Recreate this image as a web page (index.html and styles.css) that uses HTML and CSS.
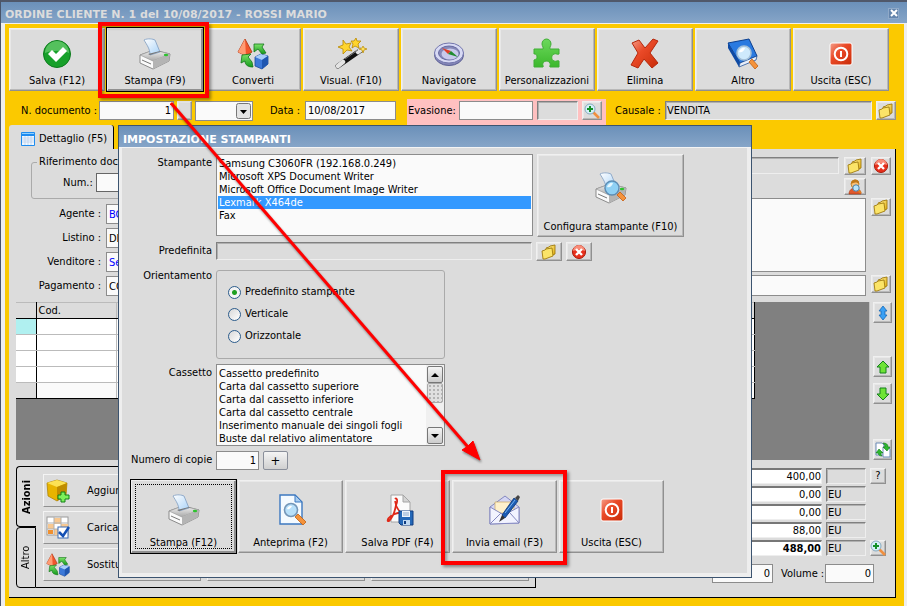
FILE: index.html
```html
<!DOCTYPE html>
<html lang="it">
<head>
    <meta charset="UTF-8">
    <meta name="viewport" content="width=device-width, initial-scale=1.0">
    <title>Ordine cliente</title>
    <link rel="stylesheet" href="styles.css">
</head>
<body>

<svg class="defs" width="0" height="0" aria-hidden="true">
    <defs>
        <linearGradient id="gGreen" x1="0" y1="0" x2="0" y2="1"><stop offset="0" stop-color="#7ee36a"/><stop offset="1" stop-color="#149a1c"/></linearGradient>
        <linearGradient id="gLime" x1="0" y1="0" x2="0" y2="1"><stop offset="0" stop-color="#6cd85c"/><stop offset="1" stop-color="#3cb82c"/></linearGradient>
        <linearGradient id="gRed" x1="0" y1="0" x2="1" y2="1"><stop offset="0" stop-color="#f4a08c"/><stop offset="0.4" stop-color="#ea4a28"/><stop offset="1" stop-color="#c82c08"/></linearGradient>
        <linearGradient id="gGold" x1="0" y1="0" x2="1" y2="1"><stop offset="0" stop-color="#fff3a0"/><stop offset="1" stop-color="#e0a800"/></linearGradient>
        <linearGradient id="gPaper" x1="0" y1="0" x2="1" y2="1"><stop offset="0" stop-color="#ffffff"/><stop offset="1" stop-color="#a8d2f8"/></linearGradient>
        <linearGradient id="gGrey" x1="0" y1="0" x2="0" y2="1"><stop offset="0" stop-color="#f4f4f4"/><stop offset="1" stop-color="#a8a8a8"/></linearGradient>
    </defs>
    <symbol id="check" viewBox="0 0 32 32">
        <circle cx="16" cy="16" r="13.5" fill="#17a02a" stroke="#0c7a1c"/>
        <path d="M4 15a12 12 0 0 1 24 0c-6-3-17-3-24 0z" fill="#6fcf74" opacity=".7"/>
        <path d="M7 16l4-4 4 4 7-7 4 4-11 11z" fill="#fff"/>
    </symbol>
    <symbol id="printer" viewBox="0 0 32 32">
        <path d="M1 17l14-5 16 4-1 7-16 8-13-6z" fill="#fafafa" stroke="#8a8a8a"/>
        <path d="M1 17l14-5 16 4-17 7z" fill="url(#gGrey)" stroke="#999" stroke-width=".7"/>
        <path d="M14 23l17-7-1 7-16 8z" fill="#b4b4b4"/>
        <path d="M3 22l9 4" stroke="#777" stroke-width="1"/>
        <path d="M5 2c4-2 9-1 11 0l5 12-10 3c0-6-3-10-6-15z" fill="url(#gPaper)" stroke="#7d9cc0" stroke-width=".8"/>
        <path d="M9 16l12-3 2 0-12 4z" fill="#777"/>
        <ellipse cx="27" cy="17" rx="2.2" ry="1.3" fill="#2dc22d"/>
    </symbol>
    <symbol id="printer-lens" viewBox="0 0 32 32">
        <use href="#printer"/>
        <path d="M22 23l3-3 6 6-3 3z" fill="#f4933c" stroke="#c85c10" stroke-width=".8"/>
        <circle cx="17" cy="16" r="7" fill="#8fd0f4" stroke="#5d8db4" stroke-width="1.4"/>
        <path d="M12 15a5 5 0 0 1 6-4c-1 3-3 5-6 4z" fill="#e6f7ff"/>
    </symbol>
    <symbol id="convert" viewBox="0 0 32 32">
        <path d="M8 1l7 13-6 4-8-4z" fill="#f0562c" stroke="#a83210" stroke-width=".8"/>
        <path d="M8 1l1 17-8-4z" fill="#ff9c74"/>
        <path d="M18 19l6-3 7 2v8l-6 5-7-3z" fill="#3b78d8" stroke="#1b4a9c" stroke-width=".8"/>
        <path d="M18 19l6-3 7 2-6 4z" fill="#a8cdfa"/><path d="M25 22l6-4v8l-6 5z" fill="#1f56b0"/>
        <path d="M17 6h10l-2 3 4 6-4 1-4-5-4 3z" fill="url(#gGreen)" stroke="#12761a" stroke-width=".8"/>
        <path d="M5 17l9-1-3 3 4 5 1 5c-5 0-8-2-8-6l-4 2z" fill="url(#gGreen)" stroke="#12761a" stroke-width=".8"/>
    </symbol>
    <symbol id="wand" viewBox="0 0 32 32">
        <path d="M3 28L26 12" stroke="#111" stroke-width="5" stroke-linecap="round"/>
        <path d="M3 28l5-4M23 14l4-3" stroke="#e4e4e4" stroke-width="4.5" stroke-linecap="round"/>
        <path d="M10 21l13-9" stroke="#777" stroke-width="1"/>
        <path d="M8 2l3 4 5-1-2 4 3 4-5-1-4 4v-5L3 9l5-2z" fill="#ffd52e" stroke="#b98800" stroke-width=".8"/>
        <path d="M21 0l1 3 4 0-3 3 1 4-4-2-3 2 1-4-2-3 3 0z" fill="#ffd52e" stroke="#b98800" stroke-width=".8"/>
        <path d="M28 8l1 2 3 1-3 1-1 3-1-3-3-1 3-1z" fill="#ffe25a" stroke="#b98800" stroke-width=".7"/>
    </symbol>
    <symbol id="compass" viewBox="0 0 32 32">
        <ellipse cx="16" cy="17" rx="14.5" ry="10.5" fill="#8587b8" stroke="#5c5f94"/>
        <ellipse cx="16" cy="15" rx="14.5" ry="10" fill="#d8daf4" stroke="#7376ac"/>
        <ellipse cx="16" cy="15" rx="10.5" ry="7" fill="#8688b8" stroke="#6669a0"/>
        <ellipse cx="17" cy="16" rx="8.5" ry="5.5" fill="#c8caec"/>
        <path d="M9 10l9 3-3 3z" fill="#e04028"/><path d="M25 19l-7-6-3 3z" fill="#208c30"/>
    </symbol>
    <symbol id="puzzle" viewBox="0 0 32 32">
        <path d="M3 11h9c1-1-1-3-1-5 0-3 2-5 4.500-5S20 3 20 6c0 2-2 4-1 5h9v5c-2 1-3-1-5 0-3 1-3 6 0 7 2 1 3-1 5 0v6h-9c-1-1 1-2 0-4-2-3-6-2-7 0-1 2 1 3 0 4H3v-7c1-1 3 0 3-3s-2-3-3-3z" fill="url(#gLime)" stroke="#3fae34"/>
    </symbol>
    <symbol id="cross" viewBox="0 0 32 32">
        <path d="M3 5l7-3 6 8 8-9 5 2-8 12 8 10-6 5-8-9-6 9-7-3 7-12z" fill="url(#gRed)" stroke="#b5280c"/>
    </symbol>
    <symbol id="book" viewBox="0 0 32 32">
        <path d="M1 5L22 1l8 17-17 7z" fill="#2a7ae0" stroke="#0c4090"/>
        <path d="M1 5l12 20-1 4L1 10z" fill="#0e4aa4"/>
        <path d="M12 29l1-4 17-7-1 4z" fill="#e8eef8" stroke="#0c4090" stroke-width=".7"/>
        <path d="M22 24l3-3 6 7-3 3z" fill="#f4933c" stroke="#c06010" stroke-width=".8"/>
        <circle cx="17" cy="15" r="7" fill="#cfeafc" stroke="#a4c0d8" stroke-width="1.6"/>
        <path d="M12 14a5 5 0 0 1 6-4c-1 3-3 5-6 4z" fill="#fff"/>
    </symbol>
    <symbol id="power" viewBox="0 0 32 32">
        <rect x="5" y="5" width="22" height="22" rx="2" fill="url(#gRed)" stroke="#fff"/>
        <circle cx="16" cy="16" r="6.300" fill="none" stroke="#fff" stroke-width="2"/>
        <path d="M16 13v6" stroke="#fff" stroke-width="2"/>
    </symbol>
    <symbol id="folder" viewBox="0 0 16 16">
        <path d="M5 4l3-1 1-1 5-1v9l-7 3z" fill="url(#gGold)" stroke="#a07c10" stroke-width=".9"/>
        <path d="M1 7l3-1 1-1 6-1 1 8-8 3-2 0z" fill="#fbe468" stroke="#a07c10" stroke-width=".9"/>
    </symbol>
    <symbol id="remove" viewBox="0 0 16 16">
        <circle cx="8" cy="8" r="6.500" fill="#e8301c" stroke="#a81808"/>
        <path d="M2 7a6 6 0 0 1 12 0c-4-2-8-2-12 0z" fill="#f88c78"/>
        <path d="M5 5l6 6M11 5l-6 6" stroke="#fff" stroke-width="2.400"/>
    </symbol>
    <symbol id="person" viewBox="0 0 16 16">
        <path d="M2 15c0-4 3-6 6-6s6 2 6 6z" fill="#e0582c" stroke="#a83810" stroke-width=".6"/>
        <circle cx="8" cy="5" r="4" fill="#f8c078" stroke="#b87820" stroke-width=".8"/>
        <path d="M4 5c0-6 9-6 8 0-2-2-5-2-8 0z" fill="#c07818"/>
        <path d="M11 11l3 3" stroke="#e08020" stroke-width="2"/>
        <circle cx="9" cy="9" r="3.200" fill="#b8e4fa" stroke="#4c80a8"/>
    </symbol>
    <symbol id="zoom-plus" viewBox="0 0 16 16">
        <path d="M9 9l6 6" stroke="#f09040" stroke-width="2.600"/>
        <circle cx="6" cy="6" r="5" fill="#d4f0f8" stroke="#88aac0"/>
        <path d="M6 3v6M3 6h6" stroke="#129028" stroke-width="2"/>
    </symbol>
    <symbol id="updown" viewBox="0 0 16 16">
        <path d="M8 1l4 5h-2v4h2l-4 5-4-5h2V6H4z" fill="#3aa0f4" stroke="#1468b8" stroke-width=".8"/>
    </symbol>
    <symbol id="up" viewBox="0 0 16 16">
        <path d="M8 2l6 6h-3v6H5V8H2z" fill="#6ee436" stroke="#14801c"/>
    </symbol>
    <symbol id="down" viewBox="0 0 16 16">
        <path d="M8 14l6-6h-3V2H5v6H2z" fill="#6ee436" stroke="#14801c"/>
    </symbol>
    <symbol id="swap" viewBox="0 0 16 16">
        <path d="M1 1h6l2 2v10H1z" fill="#fff" stroke="#6c8cb8"/>
        <path d="M8 5h5l2 2v8H8z" fill="#fff" stroke="#6c8cb8"/>
        <path d="M4 7l4 4H6c0 2 0 2 1 3-2 0-4-1-4-3H1z" fill="#2eb82e" stroke="#0f7a18" stroke-width=".6"/>
        <path d="M12 9L8 5h2c0-2-1-3-2-4 3 0 5 1 5 4h2z" fill="#2eb82e" stroke="#0f7a18" stroke-width=".6"/>
    </symbol>
    <symbol id="box" viewBox="0 0 24 24">
        <path d="M1 4l10-3 10 3-1 12-9 6-9-5z" fill="#e8b400" stroke="#a87c00" stroke-width=".7"/>
        <path d="M1 4l10-3 10 3-10 4z" fill="#fce254"/><path d="M11 8l10-4-1 12-9 6z" fill="#bf8c00"/>
        <path d="M15 13h4v3h4v4h-4v3h-4v-3h-3v-4h3z" fill="#7cf05a" stroke="#128018"/>
    </symbol>
    <symbol id="grid-check" viewBox="0 0 24 24">
        <rect x="1" y="1" width="21" height="18" fill="#fff" stroke="#9a9a9a"/>
        <path d="M2 8h6v5H2zM8 2h7v6H8zM15 8h7v5h-7zM8 13h5v6H8z" fill="#f8c890"/>
        <path d="M2 14h5v4H2z" fill="#f09030"/>
        <path d="M8 1v18M15 1v18M1 7h21M1 13h21" stroke="#b0b0b0"/>
        <rect x="12" y="11" width="10" height="11" fill="#fff" stroke="#3c6cb4"/>
        <path d="M13 16l4 4 6-9" fill="none" stroke="#1450b4" stroke-width="2.500"/>
    </symbol>
    <symbol id="calendar" viewBox="0 0 14 14">
        <rect x="0" y="0" width="14" height="14" rx="1" fill="#1e8cf0"/>
        <rect x="1" y="4" width="12" height="9" fill="#f0f8ff"/>
        <path d="M1 1h12v1H1z" fill="#8fd0ff"/>
        <path d="M1 6h12M1 8h12M1 10h12M4 4v9M7 4v9M10 4v9" stroke="#b8cce8" stroke-width=".7"/>
    </symbol>
    <symbol id="preview" viewBox="0 0 32 32">
        <path d="M5 1h15l7 7v22H5z" fill="#f4faff" stroke="#3c78c0" stroke-width="1.400"/>
        <path d="M20 1v7h7z" fill="#a8cdf0" stroke="#3c78c0"/>
        <path d="M20 23l3-3 8 8-3 3z" fill="#f4933c" stroke="#c06010" stroke-width=".8"/>
        <circle cx="16" cy="16" r="6.500" fill="#b8e0fa" stroke="#7496b8" stroke-width="1.600"/>
        <path d="M12 15a4 4 0 0 1 5-3c-1 2-3 4-5 3z" fill="#fff"/>
    </symbol>
    <symbol id="pdf" viewBox="0 0 32 32">
        <path d="M9 1h12l7 7v20H9z" fill="#fbfbfb" stroke="#a4a4a4"/>
        <path d="M21 1v7h7z" fill="#d4d4d4" stroke="#a4a4a4"/>
        <path d="M13 5c2-2 3 2 1 6-1 6-4 13-7 16-2 1-2-2 2-5 4-3 10-4 13-3" fill="none" stroke="#e02818" stroke-width="1.800"/>
        <path d="M13 7c1 6 3 10 7 12" fill="none" stroke="#e02818" stroke-width="1.600"/>
        <path d="M17 17h14v14H19l-2-2z" fill="#2468b8" stroke="#103c80"/>
        <path d="M20 17h8v6h-8z" fill="#eef4fc"/><path d="M21 19h6M21 21h6" stroke="#8aa8cc"/>
        <path d="M21 26h7v5h-7z" fill="#c0d8f0"/><path d="M22 27h2v3h-2z" fill="#103c80"/>
    </symbol>
    <symbol id="mail" viewBox="0 0 32 32">
        <path d="M1 13L16 2l14 11v16l-29 1z" fill="#d4d6f4" stroke="#8488c0"/>
        <path d="M6 8h19v11H6z" fill="#fdf0cc" stroke="#c8a860" stroke-width=".7"/>
        <path d="M1 13l14 8 15-8v16l-29 1z" fill="#f2f3ff" stroke="#8488c0"/>
        <path d="M1 30l11-11M30 29l-9-10" stroke="#8488c0"/>
        <path d="M13 21L25 4l4 3-13 17z" fill="#1c5cb4" stroke="#0c3474" stroke-width=".8"/>
        <path d="M16 19L26 6" stroke="#7ab4f0" stroke-width="1"/>
        <path d="M13 21l3 3-6 4z" fill="#333"/><path d="M26 4l3-3 2 2-2 4z" fill="#444"/>
    </symbol>
</svg>

<div class="window">
    <div class="title-bar">
        <h1>ORDINE CLIENTE N. 1 del 10/08/2017 - ROSSI MARIO</h1>
        <button class="close-btn" aria-label="Chiudi"><svg viewBox="0 0 8 8"><path d="M1 1l6 6M7 1L1 7" stroke="#fff" stroke-width="2"/></svg></button>
    </div>

    <div class="window-body">
        <div class="toolbar">
            <button class="tool-btn"><svg><use href="#check"/></svg>Salva (F12)</button>
            <button class="tool-btn default"><svg><use href="#printer"/></svg>Stampa (F9)</button>
            <button class="tool-btn"><svg><use href="#convert"/></svg>Converti</button>
            <button class="tool-btn"><svg><use href="#wand"/></svg>Visual. (F10)</button>
            <button class="tool-btn"><svg><use href="#compass"/></svg>Navigatore</button>
            <button class="tool-btn"><svg><use href="#puzzle"/></svg>Personalizzazioni</button>
            <button class="tool-btn"><svg><use href="#cross"/></svg>Elimina</button>
            <button class="tool-btn"><svg><use href="#book"/></svg>Altro</button>
            <button class="tool-btn"><svg><use href="#power"/></svg>Uscita (ESC)</button>
        </div>

        <div class="doc-row">
            <div class="doc-number">
                <label for="numero">N. documento :</label>
                <input type="text" id="numero" class="num" value="1">
                <button class="mini-btn blank" aria-label="Numero"></button>
                <span class="combo">
                    <select aria-label="Serie"><option></option></select>
                    <svg viewBox="0 0 15 16" aria-hidden="true"><rect x=".5" y=".5" width="14" height="15" rx="2" fill="#e4e4e4" stroke="#777"/><path d="M4 7h7l-3.500 4z"/></svg>
                </span>
            </div>
            <div class="doc-date">
                <label for="data">Data :</label>
                <input type="text" id="data" value="10/08/2017">
            </div>
            <div class="evasione">
                <label for="evasione">Evasione:</label>
                <input type="text" id="evasione">
                <input type="text" class="sunken" aria-label="Stato evasione" readonly>
                <button class="mini-btn" aria-label="Dettaglio evasione"><svg><use href="#zoom-plus"/></svg></button>
            </div>
            <div class="causale">
                <label for="causale">Causale :</label>
                <input type="text" id="causale" class="sunken" value="VENDITA" readonly>
                <button class="mini-btn" aria-label="Scegli causale"><svg><use href="#folder"/></svg></button>
            </div>
        </div>

        <div class="tabs">
            <button class="tab"><svg><use href="#calendar"/></svg>Dettaglio (F5)</button>
        </div>

        <div class="panel">
            <div class="order-head">
                <div class="order-left">
                    <fieldset class="reference">
                        <legend>Riferimento documento</legend>
                        <label for="num">Num.:</label>
                        <input type="text" id="num">
                    </fieldset>
                    <div class="order-field"><label for="agente">Agente :</label><input type="text" id="agente" class="link" value="BO"></div>
                    <div class="order-field"><label for="listino">Listino :</label><input type="text" id="listino" value="DE"></div>
                    <div class="order-field"><label for="venditore">Venditore :</label><input type="text" id="venditore" class="link" value="Se"></div>
                    <div class="order-field"><label for="pagamento">Pagamento :</label><input type="text" id="pagamento" value="CO"></div>
                </div>
                <div class="order-right">
                    <div class="right-row">
                        <input type="text" class="sunken" aria-label="Cliente" readonly>
                        <button class="mini-btn" aria-label="Scegli cliente"><svg><use href="#folder"/></svg></button>
                        <button class="mini-btn" aria-label="Rimuovi cliente"><svg><use href="#remove"/></svg></button>
                    </div>
                    <div class="right-row search">
                        <button class="mini-btn" aria-label="Cerca cliente"><svg><use href="#person"/></svg></button>
                    </div>
                    <div class="right-row notes">
                        <textarea aria-label="Indirizzo"></textarea>
                        <button class="mini-btn" aria-label="Scegli indirizzo"><svg><use href="#folder"/></svg></button>
                    </div>
                    <div class="right-row">
                        <input type="text" class="plain" aria-label="Destinazione">
                        <button class="mini-btn" aria-label="Scegli destinazione"><svg><use href="#folder"/></svg></button>
                    </div>
                </div>
            </div>

            <div class="order-lines">
                <div class="lines-area">
                    <table>
                        <thead>
                            <tr><th class="marker"></th><th class="code">Cod.</th><th></th></tr>
                        </thead>
                        <tbody>
                            <tr><td class="current"></td><td></td><td></td></tr>
                            <tr><td></td><td></td><td></td></tr>
                            <tr><td></td><td></td><td></td></tr>
                            <tr><td></td><td></td><td></td></tr>
                            <tr class="last"><td></td><td></td><td></td></tr>
                        </tbody>
                    </table>
                </div>
                <div class="side-buttons">
                    <button class="mini-btn" aria-label="Sposta"><svg><use href="#updown"/></svg></button>
                    <button class="mini-btn up" aria-label="Su"><svg><use href="#up"/></svg></button>
                    <button class="mini-btn" aria-label="Giù"><svg><use href="#down"/></svg></button>
                    <button class="mini-btn bottom" aria-label="Aggiorna"><svg><use href="#swap"/></svg></button>
                </div>
            </div>

            <div class="order-foot">
                <div class="actions">
                    <div class="side-tabs">
                        <button class="side-tab active">Azioni</button>
                        <button class="side-tab">Altro</button>
                    </div>
                    <div class="action-grid">
                        <button class="action-btn"><svg><use href="#box"/></svg>Aggiungi</button>
                        <button class="action-btn" aria-label="Azione"></button>
                        <button class="action-btn" aria-label="Azione"></button>
                        <button class="action-btn"><svg><use href="#grid-check"/></svg>Carica</button>
                        <button class="action-btn" aria-label="Azione"></button>
                        <button class="action-btn" aria-label="Azione"></button>
                        <button class="action-btn"><svg><use href="#convert"/></svg>Sostituisci</button>
                        <button class="action-btn" aria-label="Azione"></button>
                        <button class="action-btn" aria-label="Azione"></button>
                    </div>
                </div>
                <div class="totals">
                    <div class="total-row"><input class="num" type="text" aria-label="Merce" value="400,00"><input class="sunken" type="text" aria-label="Sconto" readonly><button class="mini-btn">?</button></div>
                    <div class="total-row"><input class="num" type="text" aria-label="Spese" value="0,00"><input class="sunken" type="text" aria-label="Valuta spese" value="EU" readonly></div>
                    <div class="total-row"><input class="num" type="text" aria-label="Trasporto" value="0,00"><input class="sunken" type="text" aria-label="Valuta trasporto" value="EU" readonly></div>
                    <div class="total-row"><input class="num" type="text" aria-label="Iva" value="88,00"><input class="sunken" type="text" aria-label="Valuta iva" value="EU" readonly></div>
                    <div class="total-row"><input class="num bold" type="text" aria-label="Totale" value="488,00"><input class="sunken" type="text" aria-label="Valuta totale" value="EU" readonly><button class="mini-btn" aria-label="Dettaglio totale"><svg><use href="#zoom-plus"/></svg></button></div>
                    <div class="volume-row">
                        <input class="num" type="text" aria-label="Peso" value="0">
                        <label for="volume">Volume :</label>
                        <input class="num volume" type="text" id="volume" value="0">
                    </div>
                </div>
            </div>
        </div>
    </div>
</div>

<div class="dialog" role="dialog" aria-labelledby="dialog-title">
    <h2 id="dialog-title">IMPOSTAZIONE STAMPANTI</h2>
    <div class="dialog-body">
        <div class="form-row">
            <label for="stampante">Stampante</label>
            <select id="stampante" class="list" size="6">
                <option>Samsung C3060FR (192.168.0.249)</option>
                <option>Microsoft XPS Document Writer</option>
                <option>Microsoft Office Document Image Writer</option>
                <option selected>Lexmark X464de</option>
                <option>Fax</option>
            </select>
            <button class="tool-btn config"><svg><use href="#printer-lens"/></svg>Configura stampante (F10)</button>
        </div>
        <div class="form-row">
            <label for="predefinita">Predefinita</label>
            <input type="text" id="predefinita" class="sunken" readonly>
            <button class="mini-btn" aria-label="Scegli predefinita"><svg><use href="#folder"/></svg></button>
            <button class="mini-btn" aria-label="Rimuovi predefinita"><svg><use href="#remove"/></svg></button>
        </div>
        <div class="form-row orientation">
            <span class="caption" id="orientamento">Orientamento</span>
            <div class="radio-group" role="radiogroup" aria-labelledby="orientamento">
                <label><input type="radio" name="orientamento" checked>Predefinito stampante</label>
                <label><input type="radio" name="orientamento">Verticale</label>
                <label><input type="radio" name="orientamento">Orizzontale</label>
            </div>
        </div>
        <div class="form-row">
            <label for="cassetto">Cassetto</label>
            <div class="scroll-list">
                <select id="cassetto" class="list" size="6">
                    <option>Cassetto predefinito</option>
                    <option>Carta dal cassetto superiore</option>
                    <option>Carta dal cassetto inferiore</option>
                    <option>Carta dal cassetto centrale</option>
                    <option>Inserimento manuale dei singoli fogli</option>
                    <option>Buste dal relativo alimentatore</option>
                </select>
                <div class="scrollbar">
                    <button aria-label="Scorri su"><svg viewBox="0 0 8 4"><path d="M0 4l4-4 4 4z"/></svg></button>
                    <div class="thumb"></div>
                    <button class="end" aria-label="Scorri giù"><svg viewBox="0 0 8 4"><path d="M0 0l4 4 4-4z"/></svg></button>
                </div>
            </div>
        </div>
        <div class="form-row copies">
            <label for="copie">Numero di copie</label>
            <input type="text" id="copie" class="num" value="1">
            <button class="plus-btn">+</button>
        </div>
        <div class="dialog-buttons">
            <button class="tool-btn default focused"><svg><use href="#printer"/></svg>Stampa (F12)</button>
            <button class="tool-btn"><svg><use href="#preview"/></svg>Anteprima (F2)</button>
            <button class="tool-btn"><svg><use href="#pdf"/></svg>Salva PDF (F4)</button>
            <button class="tool-btn"><svg><use href="#mail"/></svg>Invia email (F3)</button>
            <button class="tool-btn"><svg><use href="#power"/></svg>Uscita (ESC)</button>
        </div>
    </div>
</div>

<div class="highlight from"></div>
<div class="highlight to"></div>
<svg class="arrow" viewBox="0 0 320 370" aria-hidden="true">
    <path d="M1 1L298 345" stroke="#f00" stroke-width="3"/>
    <path d="M310 358l-18-10 6-4 5-5z" fill="#f00" stroke="#f00" stroke-width="1"/>
</svg>

</body>
</html>
```

FILE: styles.css
```css
* {
    box-sizing: border-box;
}
body {
    margin: 0;
    font: 11px/14px "DejaVu Sans Condensed", Tahoma, sans-serif;
    color: #000;
    background-color: #dcdcdc;
    position: relative;
    min-height: 100vh;
}
button, input, select, textarea {
    font: inherit;
    color: inherit;
    margin: 0;
    border-radius: 0;
}
input, textarea {
    background-color: #fafafa;
    border: 1px solid #8c8c8c;
    padding: 0 2px;
    min-width: 0;
}
button {
    padding: 0;
    cursor: pointer;
}
.defs {
    position: absolute;
}
.num {
    text-align: right;
}
.bold {
    font-weight: bold;
}
.link {
    color: #00f;
}

/* main window */
.window {
    min-height: 100vh;
    display: flex;
    flex-direction: column;
    border-left: 1px solid #4a5468;
    border-top: 2px solid #50586a;
}
.title-bar {
    height: 22px;
    display: flex;
    align-items: center;
    justify-content: space-between;
    padding: 5px 8px 0 4px;
    background: linear-gradient(#6b90b9, #86a5c8);
    border-bottom: 1px solid #f0f0f0;
}
h1, h2 {
    margin: 0;
    font: bold 11px/16px "DejaVu Sans", Verdana, sans-serif;
    white-space: nowrap;
}
h1 {
    color: #dcdcdc;
}
.close-btn {
    width: 11px;
    height: 11px;
    display: flex;
    align-items: center;
    justify-content: center;
    margin-bottom: 4px;
    background: #6485ad;
    border: 1px solid #8fa9c8;
}
.close-btn svg {
    width: 8px;
    height: 8px;
    flex: none;
}
.window-body {
    flex: 1;
    display: flex;
    flex-direction: column;
    padding: 4px 8px 8px 4px;
    background-color: #fbc900;
    border-left: 4px solid #eee;
    border-right: 3px solid #eee;
}
.toolbar {
    display: grid;
    grid-template-columns: repeat(9, 1fr);
    gap: 2px;
    padding-right: 7px;
}
.tool-btn {
    height: 63px;
    display: flex;
    flex-direction: column;
    align-items: center;
    gap: 4px;
    padding-top: 9px;
    white-space: nowrap;
    background-color: #dcdcdc;
    border: 1px solid;
    border-color: #f0f0f0 #909090 #909090 #f0f0f0;
    box-shadow: inset -1px -1px #b8b8b8, inset 1px 1px #e8e8e8;
}
.tool-btn svg {
    width: 32px;
    height: 32px;
    flex: none;
}
.tool-btn.default {
    box-shadow: inset -1px -1px #909090, 0 0 0 1px #000;
}
.mini-btn {
    width: 20px;
    height: 19px;
    flex: none;
    display: flex;
    align-items: center;
    justify-content: center;
    background-color: #dcdcdc;
    border: 1px solid;
    border-color: #f0f0f0 #909090 #909090 #f0f0f0;
    box-shadow: inset -1px -1px #b8b8b8, inset 1px 1px #e8e8e8;
}
.mini-btn svg {
    width: 16px;
    height: 16px;
    flex: none;
}
.sunken {
    background-color: #dcdcdc;
    border: 1px solid;
    border-color: #808080 #eee #eee #808080;
    box-shadow: inset 1px 1px #b0b0b0;
    padding: 0 1px;
}

.doc-row {
    display: flex;
    height: 26px;
    margin-top: 8px;
    padding-left: 12px;
}
.doc-row > div {
    display: flex;
    align-items: center;
    height: 23px;
    white-space: nowrap;
}
.doc-row input {
    height: 19px;
}
.doc-number {
    width: 232px;
    gap: 3px;
}
.doc-number label {
    width: 75px;
}
.doc-number input {
    width: 75px;
}
.doc-number .blank {
    width: 15px;
}
.combo {
    flex: 1;
    position: relative;
}
.combo select {
    display: block;
    width: 100%;
    height: 20px;
    appearance: none;
    background-color: #fafafa;
    border: 1px solid #8c8c8c;
}
.combo svg {
    position: absolute;
    right: 2px;
    top: 2px;
    width: 15px;
    height: 16px;
    pointer-events: none;
}
.doc-date {
    width: 154px;
    padding-left: 17px;
    gap: 5px;
}
.doc-date label {
    width: 30px;
}
.doc-date input {
    width: 91px;
}
.doc-row .evasione {
    width: 199px;
    height: 26px;
    padding: 0 4px 3px 1px;
    gap: 4px;
    background-color: #ffc0c0;
}
.evasione label {
    width: 47px;
}
.evasione #evasione {
    width: 75px;
}
.evasione .sunken {
    width: 41px;
}
.causale {
    flex: 1;
    padding-left: 9px;
    gap: 4px;
}
.causale label {
    width: 46px;
}
.causale input {
    flex: 1;
}

.tabs {
    display: flex;
    height: 24px;
}
.tab {
    width: 105px;
    display: flex;
    align-items: center;
    gap: 4px;
    padding: 3px 0 0 12px;
    white-space: nowrap;
    background-color: #dcdcdc;
    border: 0;
    border-right: 1px solid #000;
    border-radius: 3px 3px 0 0;
}
.tab svg {
    width: 14px;
    height: 14px;
    flex: none;
}
.panel {
    flex: 1;
    display: flex;
    flex-direction: column;
    padding: 8px 4px 9px 7px;
    background-color: #dcdcdc;
    border-right: 1px solid #000;
    border-bottom: 1px solid #000;
}
.order-head {
    display: flex;
    justify-content: space-between;
    height: 145px;
}
.order-left {
    width: 260px;
    padding-left: 15px;
}
.reference {
    height: 44px;
    display: flex;
    align-items: center;
    gap: 4px;
    margin: -2px 0 5px;
    padding: 0 0 2px 31px;
    border: 1px solid #aaa;
    border-radius: 3px;
}
.reference legend {
    padding: 0 2px;
    margin-left: -26px;
}
.reference label {
    width: 29px;
}
.reference input {
    height: 19px;
    width: 90px;
    border-color: #666;
}
.order-field {
    display: flex;
    align-items: center;
    gap: 5px;
    height: 20px;
    margin-bottom: 4px;
}
.order-field label {
    width: 70px;
    text-align: right;
    white-space: nowrap;
}
.order-field input {
    height: 20px;
    width: 120px;
}
.order-right {
    flex: 1;
    display: flex;
    flex-direction: column;
    gap: 3px;
}
.right-row {
    display: flex;
    gap: 5px;
}
.right-row input, .right-row textarea {
    flex: 1;
    display: block;
}
.right-row .sunken {
    height: 17px;
}
.right-row .mini-btn {
    height: 18px;
}
.right-row .plain {
    height: 21px;
}
.right-row .sunken + .mini-btn {
    width: 22px;
}
.right-row.search {
    justify-content: flex-end;
    padding-right: 25px;
}
.right-row.search .mini-btn {
    width: 22px;
    height: 17px;
}
.right-row.notes textarea {
    height: 74px;
    resize: none;
}

.order-lines {
    display: flex;
    gap: 3px;
    height: 158px;
}
.lines-area {
    flex: 1;
    background-color: #808080;
    border-right: 1px solid #c4c4c4;
}
.lines-area table {
    width: calc(100% - 114px);
    table-layout: fixed;
    border-collapse: collapse;
    border-right: 1px solid #000;
    border-bottom: 1px solid #000;
    background-color: #fff;
}
.lines-area th {
    height: 16px;
    padding: 0 2px;
    font-weight: normal;
    text-align: left;
    background-color: #dcdcdc;
    border-top: 1px solid #bbb;
    border-bottom: 1px solid #000;
    border-right: 1px solid #bbb;
}
.lines-area td {
    height: 16px;
    padding: 0;
    border-bottom: 1px solid #bbb;
    border-right: 1px solid #bbb;
}
.lines-area th:first-child, .lines-area td:first-child {
    border-right: 1px solid #000;
}
.lines-area th:last-child, .lines-area td:last-child {
    border-right: 1px solid #000;
}
.lines-area .marker {
    width: 20px;
}
.lines-area .code {
    width: 80px;
}
.lines-area .current {
    background-color: #b0f0f0;
}
.lines-area .last td {
    background-color: #fafafa;
    border-bottom-color: #000;
}
.lines-area .last td:first-child {
    background-color: #dcdcdc;
}
.side-buttons {
    width: 18px;
    display: flex;
    flex-direction: column;
    gap: 6px;
}
.side-buttons .mini-btn {
    height: 21px;
    width: 19px;
}
.side-buttons .up {
    margin-top: 27px;
}
.side-buttons .bottom {
    margin-top: auto;
}

.order-foot {
    display: flex;
    justify-content: space-between;
    margin-top: 6px;
}
.actions {
    flex: 0 1 520px;
    display: flex;
    height: 122px;
}
.side-tabs {
    width: 20px;
    display: flex;
    flex-direction: column;
}
.side-tab {
    flex: 1;
    writing-mode: vertical-rl;
    transform: rotate(180deg);
    background-color: #dcdcdc;
    border: 1px solid #000;
    border-radius: 0 4px 4px 0;
}
.side-tab.active {
    font-weight: bold;
    border-left: 0;
}
.action-grid {
    flex: 1;
    display: grid;
    grid-template-columns: repeat(3, 1fr);
    grid-auto-rows: 33px;
    gap: 4px 6px;
    padding: 7px 6px 0 7px;
    border: 1px solid #000;
    border-left: 0;
}
.action-btn {
    display: flex;
    align-items: center;
    gap: 17px;
    padding-left: 2px;
    background-color: #dcdcdc;
    border: 1px solid;
    border-color: #f4f4f4 #909090 #909090 #f4f4f4;
}
.action-btn svg {
    width: 24px;
    height: 24px;
    flex: none;
}

.totals {
    padding: 2px 5px 0 0;
    display: flex;
    flex-direction: column;
    gap: 2px;
}
.total-row {
    display: flex;
    gap: 4px;
    height: 16px;
}
.total-row input {
    height: 16px;
    line-height: 12px;
}
.total-row .num {
    width: 110px;
    padding: 0;
    background-color: #fff;
    border-width: 2px 1px 1px 1px;
    border-color: #777 #eee #eee #777;
}
.total-row .sunken {
    width: 40px;
}
.total-row .mini-btn {
    width: 16px;
    height: 16px;
}
.volume-row {
    display: flex;
    align-items: center;
    margin-top: 6px;
    gap: 8px;
}
.volume-row input {
    height: 19px;
    width: 61px;
}
.volume-row .volume {
    width: 49px;
    margin-left: -5px;
}
.volume-row label {
    width: 41px;
    white-space: nowrap;
}

/* printer dialog, over the main window */
.dialog {
    position: absolute;
    left: 118px;
    right: 155px;
    top: 125px;
    background-color: #dcdcdc;
    border: 1px solid #3c5470;
}
h2 {
    height: 22px;
    padding: 6px 4px 0;
    color: #fff;
    background: linear-gradient(#6b90b9, #86a5c8);
    border-bottom: 1px solid #f4f4f4;
}
.dialog-body {
    display: flex;
    flex-direction: column;
    padding: 6px 8px 20px 9px;
    border: solid #eee;
    border-width: 0 4px 4px 3px;
}
.form-row {
    display: flex;
    gap: 4px;
    margin-bottom: 5px;
}
.form-row > label, .caption {
    width: 81px;
    margin-top: 1px;
    text-align: right;
    white-space: nowrap;
}
.form-row > label {
    padding-top: 1px;
}
.list {
    width: 317px;
    height: 82px;
    padding: 2px 1px;
    background-color: #fafafa;
    border: 1px solid #8c8c8c;
    outline: 0;
    overflow: hidden;
    appearance: none;
}
.list option {
    height: 13px;
    min-height: 13px;
    padding: 0 1px;
    line-height: 13px;
}
.list option:checked {
    color: #fff;
    background: #3399ff linear-gradient(#3399ff, #3399ff);
}
.tool-btn.config {
    width: 147px;
    height: 83px;
    padding-top: 17px;
    gap: 16px;
}
.form-row > .sunken {
    width: 316px;
    height: 18px;
}
.form-row > .mini-btn {
    width: 26px;
}
.radio-group {
    width: 229px;
    height: 89px;
    display: flex;
    flex-direction: column;
    gap: 8px;
    padding: 14px 0 0 11px;
    border: 1px solid #aaa;
    border-radius: 3px;
}
.form-row.orientation {
    margin-top: 4px;
}
.orientation .caption {
    margin-top: -1px;
}
.radio-group label {
    display: flex;
    align-items: center;
    gap: 4px;
}
.radio-group input {
    appearance: none;
    width: 13px;
    height: 13px;
    padding: 0;
    border: 1px solid #2c5c8c;
    border-radius: 50%;
    background: linear-gradient(135deg, #d8d8d8, #fff);
}
.radio-group input:checked {
    background: radial-gradient(circle, #20a020 0 2px, #f4f4f4 3px);
}
.scroll-list {
    width: 229px;
    height: 82px;
    display: flex;
    background-color: #fafafa;
    border: 1px solid #8c8c8c;
}
.scroll-list .list {
    flex: 1;
    width: auto;
    height: 80px;
    padding: 2px 1px 0;
    border: 0;
}
.scrollbar {
    width: 18px;
    display: flex;
    flex-direction: column;
    padding: 1px;
    background-color: #f0f0f0;
}
.scrollbar button, .thumb {
    height: 17px;
    display: flex;
    align-items: center;
    justify-content: center;
    background: linear-gradient(#f4f4f4, #ccc);
    border: 1px solid #777;
    border-radius: 2px;
}
.scrollbar svg {
    width: 8px;
    height: 4px;
}
.scrollbar .thumb {
    height: 20px;
    border-color: #aaa;
    background: radial-gradient(circle, #b4b4b4 0 1px, transparent 1px) 0 0 / 4px 4px #e0e0e0;
}
.scrollbar .end {
    margin-top: auto;
}
.copies input {
    width: 43px;
    height: 19px;
}
.plus-btn {
    width: 25px;
    height: 19px;
    font-size: 13px;
    background: linear-gradient(#f4f4f4, #d0d0d0);
    border: 1px solid #8a8f9a;
    border-radius: 2px;
}
.dialog-buttons {
    display: grid;
    grid-template-columns: repeat(5, 1fr);
    gap: 2px;
    padding-right: 75px;
    margin-top: 5px;
}
.dialog-buttons .tool-btn {
    height: 73px;
    padding-top: 13px;
    gap: 10px;
}
.tool-btn.focused {
    outline: 1px dotted #000;
    outline-offset: -5px;
}

/* callouts */
.highlight {
    position: absolute;
    border: 4px solid #f00;
    box-shadow: 2px 2px 3px rgba(0, 0, 0, .4), inset 2px 2px 3px rgba(0, 0, 0, .3);
    pointer-events: none;
}
.highlight.from {
    left: 98px;
    top: 22px;
    width: 111px;
    height: 76px;
}
.highlight.to {
    left: 441px;
    top: 470px;
    width: 126px;
    height: 95px;
}
.arrow {
    position: absolute;
    left: 170px;
    top: 102px;
    width: 320px;
    height: 370px;
    pointer-events: none;
    filter: drop-shadow(1px 2px 1px rgba(0, 0, 0, .4));
}
```
